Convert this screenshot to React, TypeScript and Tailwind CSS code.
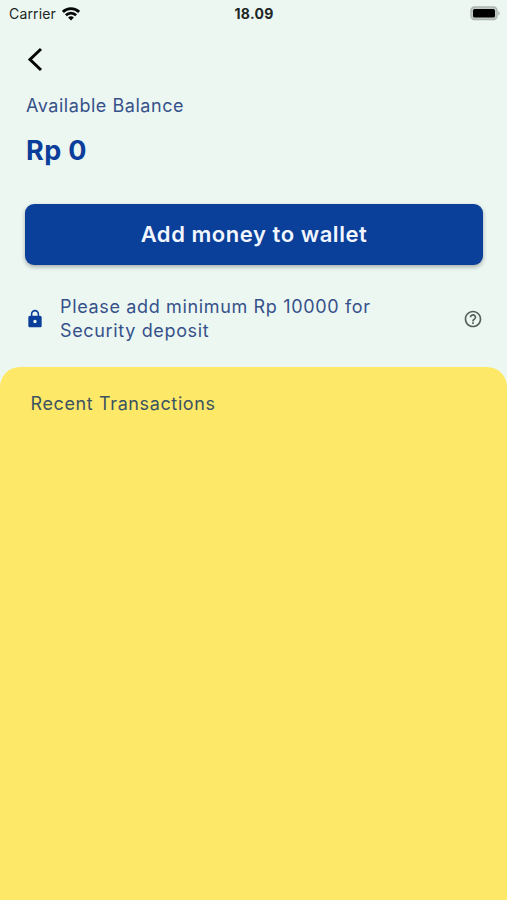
function StatusBar() {
  return (
    <header className="grid h-7 grid-cols-[1fr_auto_1fr] items-center pr-[7px] pl-[9px] text-[#202624]">
      <div className="flex items-center gap-[6px]">
        <span className="text-[14px] leading-none tracking-[0.15px]">Carrier</span>
        <svg width="18" height="14" viewBox="0 0 18 14" fill="none" stroke="#050706" strokeWidth="2.8" aria-label="Wi-Fi">
          <path d="M0.9 4.9C5.2.5 12.8.5 17.1 4.9" />
          <path d="M3.9 8.2c2.8-2.8 7.4-2.8 10.2 0" />
          <path d="M9 13.5 6.1 10.5c1.6-1.6 4.2-1.6 5.8 0Z" fill="#050706" stroke="none" />
        </svg>
      </div>
      <span className="-ml-px text-[14px] leading-none font-bold tracking-[0.3px]">18.09</span>
      <svg className="-mt-0.5 justify-self-end" width="30" height="15" viewBox="0 0 30 15" aria-label="Battery">
        <rect x="1" y="1" width="26" height="12.5" rx="3.5" fill="#c3cbc7" stroke="#adb5b1" strokeWidth="1.4" />
        <rect x="3" y="3" width="22" height="8.5" rx="1.6" fill="#000" />
        <path d="M28.2 5v4.6c2-.9 2-3.7 0-4.6Z" fill="#adb5b1" />
      </svg>
    </header>
  );
}

export default function App() {
  return (
    <div className="flex h-[900px] w-full flex-col overflow-hidden bg-[#ecf7f2] font-['Inter','Liberation_Sans',sans-serif] text-[#36518a]">
      <StatusBar />
      <main className="flex flex-1 flex-col">
        <section className="flex h-[339px] flex-col pr-6 pl-[25px]">
          <button className="mt-[18px] h-[26px] w-5" aria-label="Back">
            <svg width="20" height="26" viewBox="0 0 20 26" fill="none" stroke="#050706" strokeWidth="3">
              <path d="M16 3 5 13.5 16 24" />
            </svg>
          </button>
          <h2 className="mt-[22px] pl-px text-[18px] leading-6 tracking-[0.54px]">Available Balance</h2>
          <p className="mt-[17px] pl-px text-[27px] leading-8 font-bold tracking-[0.4px] text-[#0a3e9a]">Rp 0</p>
          <button className="mt-[37px] h-[61px] shrink-0 rounded-[9px] bg-[#0a3f9a] text-[22px] font-semibold tracking-[0.55px] text-[#f1f6ff] shadow-[0_2px_4px_rgba(0,0,0,0.3)]">
            Add money to wallet
          </button>
          <div className="mt-[29px] flex items-center">
            <svg className="shrink-0" width="20" height="20" viewBox="0 0 24 24" fill="#0a3e9a" aria-hidden="true">
              <path d="M18 8h-1V6c0-2.76-2.24-5-5-5S7 3.24 7 6v2H6c-1.1 0-2 .9-2 2v10c0 1.1.9 2 2 2h12c1.1 0 2-.9 2-2V10c0-1.1-.9-2-2-2Zm-6 9c-1.1 0-2-.9-2-2s.9-2 2-2 2 .9 2 2-.9 2-2 2ZM8.9 8V6c0-1.71 1.39-3.1 3.1-3.1s3.1 1.39 3.1 3.1v2Z" />
            </svg>
            <p className="ml-[15px] flex-1 pt-px text-[18px] leading-[24px] tracking-[0.65px]">
              Please add minimum Rp 10000 for
              <br />
              Security deposit
            </p>
            <svg className="shrink-0" width="20" height="20" viewBox="0 0 24 24" fill="#55605b" aria-label="Help">
              <path d="M11 18h2v-2h-2v2Zm1-16C6.48 2 2 6.48 2 12s4.48 10 10 10 10-4.48 10-10S17.52 2 12 2Zm0 18c-4.41 0-8-3.59-8-8s3.59-8 8-8 8 3.59 8 8-3.59 8-8 8Zm0-14c-2.21 0-4 1.79-4 4h2c0-1.1.9-2 2-2s2 .9 2 2c0 2-3 1.75-3 5h2c0-2.25 3-2.5 3-5 0-2.21-1.79-4-4-4Z" />
            </svg>
          </div>
        </section>
        <section className="flex-1 rounded-t-[20px] bg-[#fee868] px-[30.5px] pt-[25px]">
          <h2 className="text-[18px] leading-6 tracking-[0.62px] text-[#3c5360]">Recent Transactions</h2>
        </section>
      </main>
    </div>
  );
}
